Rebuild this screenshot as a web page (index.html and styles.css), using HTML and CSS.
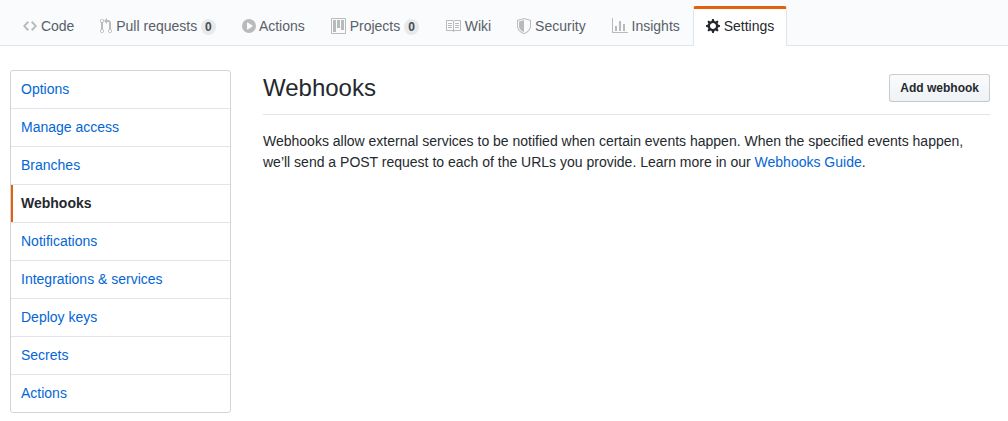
FILE: index.html
```html
<!DOCTYPE html>
<html lang="en">
<head>
<meta charset="utf-8">
<title>Webhooks</title>
<link rel="stylesheet" href="styles.css">
</head>
<body>
<nav class="tabs" aria-label="Repository">
  <a class="tab" href="#code"><svg class="icon" width="14" height="16" viewBox="0 0 14 16" aria-hidden="true"><path d="M9.500 3L8 4.500 11.500 8 8 11.500 9.500 13 14 8 9.500 3zm-5 0L0 8l4.500 5L6 11.500 2.500 8 6 4.500 4.500 3z"/></svg> Code</a>
  <a class="tab" href="#pulls"><svg class="icon" width="12" height="16" viewBox="0 0 12 16" aria-hidden="true"><path d="M11 11.280V5c-.03-.78-.34-1.470-.94-2.060C9.460 2.350 8.780 2.030 8 2H7V0L4 3l3 3V4h1c.27.02.48.11.69.31.21.2.3.42.31.69v6.280A1.993 1.993 0 0 0 10 15a1.993 1.993 0 0 0 1-3.720zm-1 2.920c-.66 0-1.200-.55-1.200-1.200 0-.65.55-1.200 1.200-1.200.65 0 1.200.55 1.200 1.200 0 .65-.55 1.200-1.200 1.200zM4 3c0-1.110-.89-2-2-2a1.993 1.993 0 0 0-1 3.720v6.560A1.993 1.993 0 0 0 2 15a1.993 1.993 0 0 0 1-3.720V4.720c.59-.34 1-.98 1-1.720zm-.8 10c0 .66-.55 1.200-1.200 1.200-.65 0-1.200-.55-1.200-1.200 0-.65.55-1.200 1.200-1.200.65 0 1.200.55 1.200 1.200zM2 4.200C1.340 4.200.8 3.650.8 3c0-.65.55-1.200 1.200-1.200.65 0 1.200.55 1.200 1.200 0 .65-.55 1.200-1.200 1.200z"/></svg> Pull requests <span class="counter">0</span></a>
  <a class="tab" href="#actions"><svg class="icon" width="14" height="16" viewBox="0 0 14 16" aria-hidden="true"><path fill-rule="evenodd" d="M14 8A7 7 0 1 1 0 8a7 7 0 0 1 14 0zm-8.223 3.482l4.599-3.066a.5.5 0 0 0 0-.832L5.777 4.518A.5.5 0 0 0 5 4.934v6.132a.5.5 0 0 0 .777.416z"/></svg> Actions</a>
  <a class="tab" href="#projects"><svg class="icon" width="15" height="16" viewBox="0 0 15 16" aria-hidden="true"><path fill-rule="evenodd" d="M10 12h3V2h-3v10zm-4-2h3V2H6v8zm-4 4h3V2H2v12zm-1 1h13V1H1v14zM14 0H1a1 1 0 0 0-1 1v14a1 1 0 0 0 1 1h13a1 1 0 0 0 1-1V1a1 1 0 0 0-1-1z"/></svg> Projects <span class="counter">0</span></a>
  <a class="tab" href="#wiki"><svg class="icon" width="16" height="16" viewBox="0 0 16 16" aria-hidden="true"><path fill-rule="evenodd" d="M3 5h4v1H3V5zm0 3h4V7H3v1zm0 2h4V9H3v1zm11-5h-4v1h4V5zm0 2h-4v1h4V7zm0 2h-4v1h4V9zm2-6v9c0 .55-.45 1-1 1H9.500l-1 1-1-1H2c-.55 0-1-.45-1-1V3c0-.55.45-1 1-1h5.500l1 1 1-1H15c.55 0 1 .45 1 1zm-8 .5L7.500 3H2v9h6V3.500zm7-.5H9.500l-.5.5V12h6V3z"/></svg> Wiki</a>
  <a class="tab" href="#security"><svg class="icon" width="14" height="16" viewBox="0 0 14 16" aria-hidden="true"><path fill-rule="evenodd" d="M0 2l7-2 7 2v6.020C14 12.690 8.690 16 7 16c-1.690 0-7-3.310-7-7.980V2zm1 .75L7 1l6 1.750v5.268C13 12.104 8.449 15 7 15c-1.449 0-6-2.896-6-6.982V2.750zm1 .75L7 2v12c-1.207 0-5-2.482-5-5.985V3.500z"/></svg> Security</a>
  <a class="tab" href="#insights"><svg class="icon" width="16" height="16" viewBox="0 0 16 16" aria-hidden="true"><path d="M16 14v1H0V0h1v14h15zM5 13H3V8h2v5zm4 0H7V3h2v10zm4 0h-2V6h2v7z"/></svg> Insights</a>
  <a class="tab tab-selected" href="#settings" aria-current="page"><svg class="icon" width="14" height="16" viewBox="0 0 14 16" aria-hidden="true"><path fill-rule="evenodd" d="M14 8.770v-1.600l-1.940-.64-.45-1.090.88-1.840-1.130-1.130-1.810.91-1.090-.45-.69-1.920h-1.600l-.63 1.940-1.110.45-1.840-.88-1.130 1.130.91 1.810-.45 1.090L0 7.230v1.590l1.940.64.45 1.090-.88 1.840 1.130 1.130 1.810-.91 1.090.45.69 1.920h1.590l.63-1.940 1.110-.45 1.840.88 1.130-1.130-.92-1.810.47-1.090L14 8.750v.02zM7 11c-1.660 0-3-1.340-3-3s1.340-3 3-3 3 1.340 3 3-1.340 3-3 3z"/></svg> Settings</a>
</nav>
<div class="layout">
  <nav class="menu" aria-label="Settings">
    <a class="menu-item" href="#options">Options</a>
    <a class="menu-item" href="#access">Manage access</a>
    <a class="menu-item" href="#branches">Branches</a>
    <a class="menu-item menu-item-selected" href="#webhooks" aria-current="page">Webhooks</a>
    <a class="menu-item" href="#notifications">Notifications</a>
    <a class="menu-item" href="#integrations">Integrations &amp; services</a>
    <a class="menu-item" href="#keys">Deploy keys</a>
    <a class="menu-item" href="#secrets">Secrets</a>
    <a class="menu-item" href="#actions-settings">Actions</a>
  </nav>
  <main class="content">
    <header class="subhead">
      <h1 class="subhead-title">Webhooks</h1>
      <button class="button" type="button">Add webhook</button>
    </header>
    <p class="intro">Webhooks allow external services to be notified when certain events happen. When the specified events happen, we’ll send a POST request to each of the URLs you provide. Learn more in our <a class="link" href="#guide">Webhooks Guide</a>.</p>
  </main>
</div>
</body>
</html>
```

FILE: styles.css
```css
* {
  box-sizing: border-box;
}

body {
  margin: 0;
  background: #fff;
  color: #24292e;
  font-family: "Liberation Sans", Arial, sans-serif;
  font-size: 14px;
  line-height: 21px;
}

.tabs {
  display: flex;
  padding: 6px 10px 0;
  background: #fafbfc;
  box-shadow: inset 0 -1px #e1e4e8;
}

.tab {
  padding: 7px 12px 9px;
  border: 1px solid transparent;
  border-top-width: 3px;
  border-bottom: 0;
  border-radius: 3px 3px 0 0;
  color: #586069;
  text-decoration: none;
  white-space: nowrap;
}

.tab-selected {
  background: #fff;
  border-color: #e36209 #e1e4e8 transparent;
  color: #24292e;
}

.icon {
  fill: #b8babc;
  vertical-align: text-bottom;
}

.tab-selected .icon {
  fill: #24292e;
}

.counter {
  display: inline-block;
  padding: 2px 4px;
  border-radius: 20px;
  background: rgba(27, 31, 35, 0.08);
  color: #444d56;
  font-size: 12px;
  font-weight: 600;
  line-height: 12px;
}

.layout {
  display: flex;
  align-items: flex-start;
  gap: 32px;
  padding: 24px 18px 8px 10px;
}

.menu {
  flex: 0 0 221px;
  border: 1px solid #d1d5da;
  border-radius: 3px;
  overflow: hidden;
}

.menu-item {
  display: block;
  padding: 8px 10px;
  border-bottom: 1px solid #e1e4e8;
  color: #0366d6;
  text-decoration: none;
}

.menu-item:last-child {
  border-bottom: 0;
}

.menu-item-selected {
  box-shadow: inset 2px 0 #e36209;
  color: #24292e;
  font-weight: 600;
}

.content {
  flex: 1;
  min-width: 0;
}

.subhead {
  display: flex;
  align-items: center;
  justify-content: space-between;
  padding-bottom: 8px;
  border-bottom: 1px solid #e1e4e8;
}

.subhead-title {
  margin: 0;
  font-size: 24px;
  font-weight: 400;
  line-height: 36px;
}

.button {
  padding: 3px 10px;
  border: 1px solid rgba(27, 31, 35, 0.2);
  border-radius: 3px;
  background: #eff3f6 linear-gradient(-180deg, #fafbfc, #eff3f6 90%) -1px -1px / 110% 110%;
  color: #24292e;
  font: 600 12px/20px "Liberation Sans", Arial, sans-serif;
}

.intro {
  margin: 16px 0 0;
}

.link {
  color: #0366d6;
  text-decoration: none;
}
```
